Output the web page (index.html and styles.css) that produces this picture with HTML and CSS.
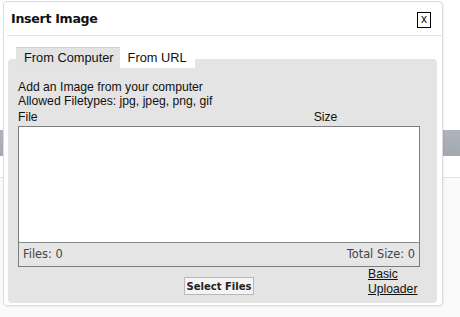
FILE: index.html
```html
<!DOCTYPE html>
<html lang="en">
<head>
  <meta charset="UTF-8" />
  <title>Insert Image</title>
  <link rel="stylesheet" href="styles.css">
</head>
<body>
  <div class="page">
    <div class="toolbar"></div>
    <div class="rule"></div>
  </div>

  <div class="dialog">
    <div class="header">
      <h2>Insert Image</h2>
      <span class="close">x</span>
    </div>

    <div class="content">
      <div class="tabs">
        <span class="tab active">From Computer</span>
        <span class="tab">From URL</span>
      </div>

      <div class="panel">
        <p>Add an Image from your computer</p>
        <p>Allowed Filetypes: jpg, jpeg, png, gif</p>
        <div class="cols">
          <span>File</span>
          <span class="size-col">Size</span>
        </div>
        <div class="filebox">
          <div class="filelist"></div>
          <div class="filefoot">
            <span>Files: 0</span>
            <span>Total Size: 0</span>
          </div>
        </div>
        <div class="actions">
          <span></span>
          <button>Select Files</button>
          <a href="#">Basic Uploader</a>
        </div>
      </div>
    </div>
  </div>
</body>
</html>
```

FILE: styles.css
```css
body {
  margin: 0;
  background: #fff;
  font-family: "Liberation Sans", Arial, sans-serif;
  font-size: 12.2px;
  color: #111;
  position: relative;
  height: 317px;
  overflow: hidden;
}
.page {
  padding-top: 130px;
}
.toolbar {
  height: 26px;
  background: linear-gradient(#b0b5bd, #a2a8b0);
}
.rule {
  margin-top: 21px;
  border-top: 1px solid #e2e2e2;
  height: 140px;
  background: #fafafa;
}
.dialog {
  position: absolute;
  left: 3px;
  top: 1px;
  width: 440px;
  height: 305px;
  box-sizing: border-box;
  background: #fff;
  border: 1px solid #dcdcdc;
  border-radius: 4px;
  box-shadow: 1px 1px 2px rgba(0,0,0,0.06);
}
.header {
  display: flex;
  justify-content: space-between;
  align-items: center;
  height: 33px;
  margin-left: 3px;
  padding: 0 11px 0 4px;
  border-bottom: 1px solid #e4e4e4;
}
h2 {
  margin: 0;
  font-family: "DejaVu Sans", Verdana, sans-serif;
  font-size: 12.6px;
  font-weight: bold;
  letter-spacing: -0.3px;
}
.close {
  width: 12px;
  height: 14px;
  border: 1px solid #000;
  font-size: 12px;
  line-height: 13px;
  text-align: center;
  margin-top: 2px;
}
.content {
  padding: 11px 5px 0 4px;
}
.tabs {
  display: flex;
  padding-left: 8px;
  position: relative;
  z-index: 1;
  margin-bottom: -9px;
  font-size: 12.8px;
}
.tab {
  height: 21px;
  line-height: 21px;
  padding: 0 8px;
  background: #fff;
}
.tab.active {
  background: #e3e3e3;
  border-top: 1px solid #cfcfcf;
  height: 20px;
  line-height: 20px;
  padding: 0 6px 0 8px;
}
.panel {
  background: #e4e4e4;
  border-radius: 4px;
  padding: 21px 17px 6px 10px;
}
p {
  margin: 0;
  line-height: 14px;
}
.cols {
  display: flex;
  line-height: 14px;
  margin-top: 2px;
}
.size-col {
  margin-left: 276px;
}
.filebox {
  margin-top: 2px;
  border: 1px solid #7c7c7c;
  background: #fff;
}
.filelist {
  height: 115px;
}
.filefoot {
  display: flex;
  justify-content: space-between;
  height: 23px;
  line-height: 23px;
  padding: 0 4px;
  background: #e6e6e6;
  border-top: 1px solid #8a8a8a;
  color: #444;
  font-family: "DejaVu Sans", Tahoma, sans-serif;
  font-size: 11.4px;
}
.actions {
  display: grid;
  grid-template-columns: 1fr auto 1fr;
  align-items: start;
}
button {
  margin-top: 10px;
  height: 18px;
  padding: 0 2px;
  border: 1px solid #b8b8b8;
  background: #f4f4f4;
  font-family: "DejaVu Sans", Tahoma, sans-serif;
  font-size: 10px;
  font-weight: bold;
  color: #222;
}
a {
  justify-self: end;
  width: 52px;
  color: #111;
  line-height: 15px;
}
```
